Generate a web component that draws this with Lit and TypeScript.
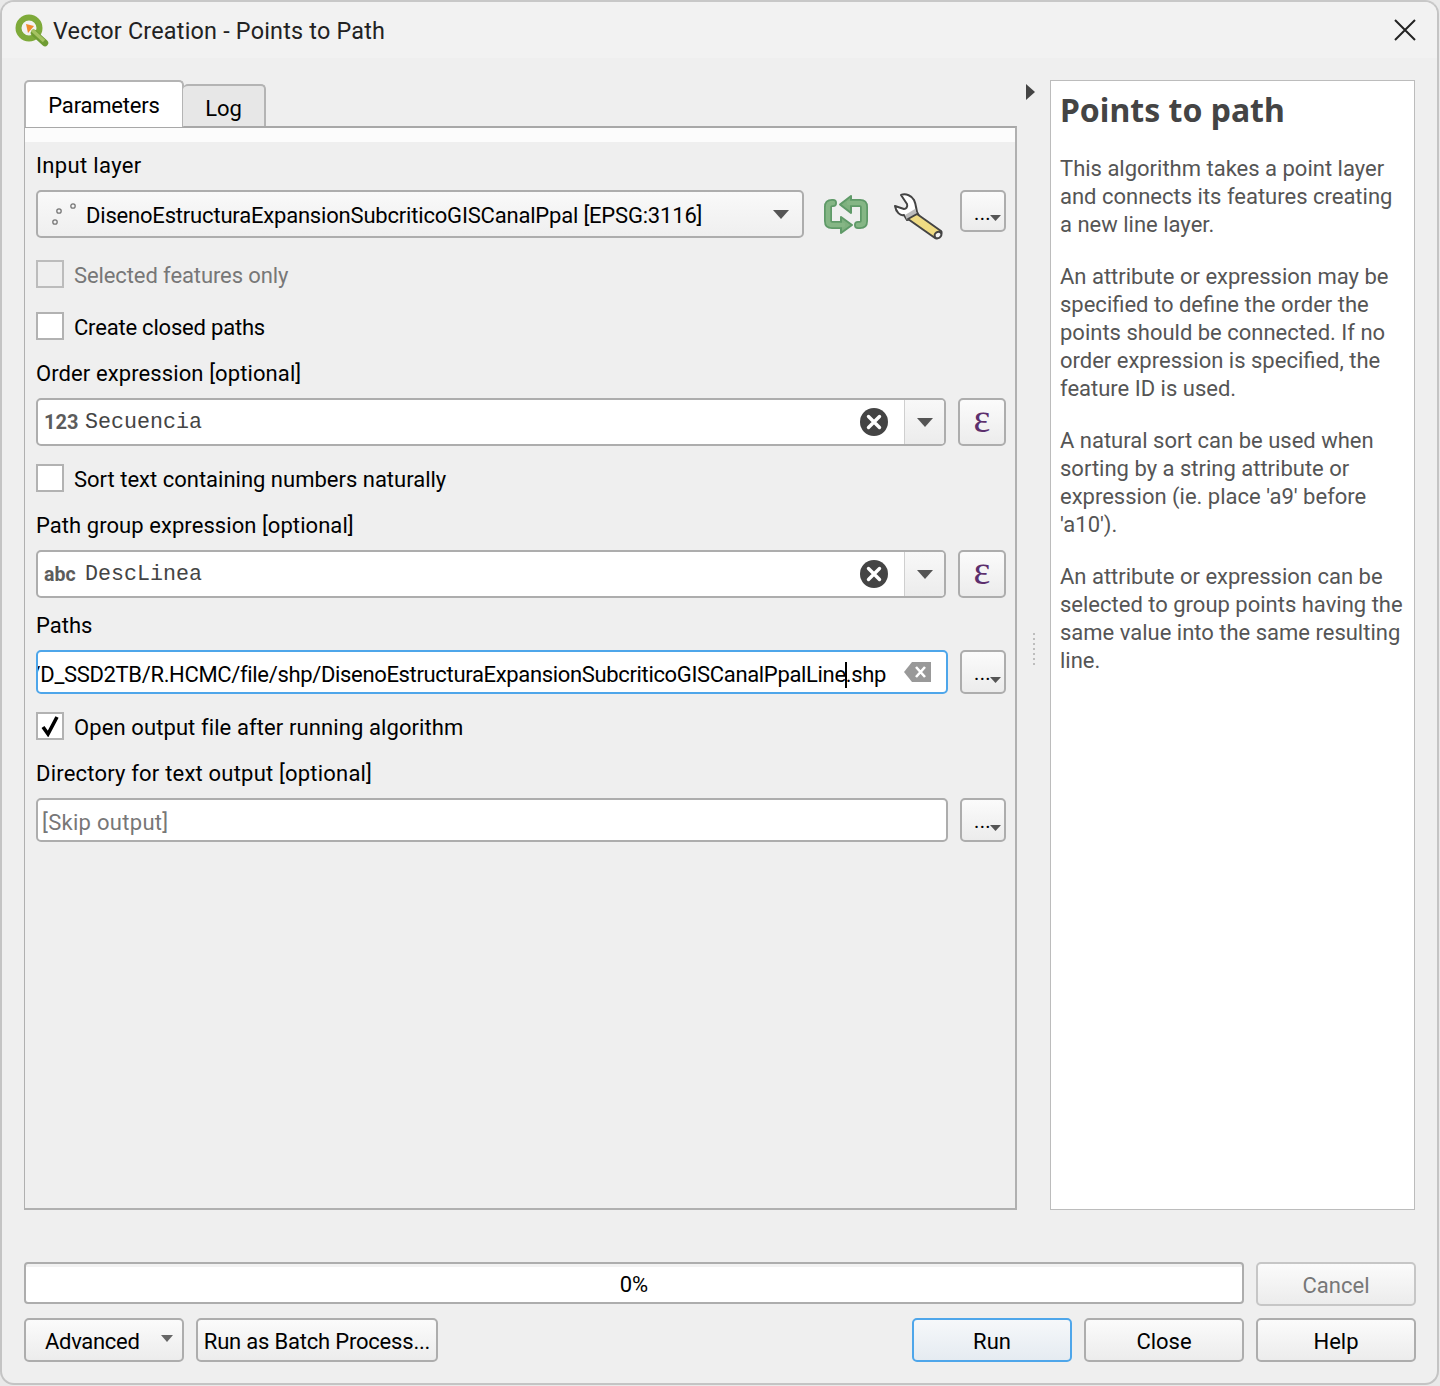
import { LitElement, html, css, svg } from "lit";
import { customElement } from "lit/decorators.js";

const caret = svg`<svg class="caret" width="16" height="9" viewBox="0 0 16 9"><path d="M0 0H16L8 9Z" fill="#555"/></svg>`;
const clearIcon = html`<svg class="clear" width="30" height="30" viewBox="0 0 30 30"><circle cx="15" cy="15" r="14" fill="#444"/><path d="M9.5 9.5L20.5 20.5M20.5 9.5L9.5 20.5" stroke="#fff" stroke-width="3.4" stroke-linecap="round"/></svg>`;
const dotsBtn = html`<div class="btn dots"><span class="dotstext">...</span><svg class="dotcaret" width="11" height="6" viewBox="0 0 11 6"><path d="M0 0H11L5.5 6Z" fill="#555"/></svg></div>`;

@customElement("app-root")
export class AppRoot extends LitElement {
  static styles = css`
    :host { display: block; width: 1440px; height: 1386px; background: #e9e9e9; font-family: Roboto, sans-serif; font-size: 22px; color: #000; overflow: hidden; }
    * { box-sizing: border-box; }
    .win { width: 1439px; height: 1385px; background: #efefef; border: 2px solid #c4c4c4; border-top-color: #c8c8c8; border-radius: 14px; display: flex; flex-direction: column; overflow: hidden; }
    .title { height: 56px; flex: none; background: #f2f2f2; display: flex; align-items: center; padding-left: 12px; }
    .title .t { margin-left: 3px; padding-top: 2px; font-size: 23.4px; color: #222; letter-spacing: .2px; flex: 1; }
    .x { margin-right: 21px; }
    .main { display: flex; height: 1130px; margin-top: 22px; padding-left: 22px; flex: none; }
    .left { width: 993px; display: flex; flex-direction: column; flex: none; }
    .tabs { display: flex; align-items: flex-end; height: 46px; flex: none; position: relative; z-index: 1; }
    .tab { border: 2px solid #b4b4b4; border-bottom: none; border-radius: 5px 5px 0 0; display: flex; align-items: center; justify-content: center; }
    .tab.on { width: 160px; height: 47px; padding-top: 2px; background: #fff; margin-bottom: -1px; letter-spacing: -.2px; }
    .tab.off { width: 83px; height: 42px; background: #e7e7e7; margin-left: -1px; padding-top: 4px; border-left: none; }
    .pane { flex: 1; border: 2px solid #b0b0b0; border-top-color: #a8a8a8; border-left-width: 1px; background: #efefef; min-height: 0; display: flex; flex-direction: column; }
    .strip { height: 14px; background: #fcfcfc; flex: none; }
    .form { padding: 0 9px 0 11px; display: flex; flex-direction: column; }
    .label { height: 28px; line-height: 28px; padding-top: 1px; white-space: nowrap; }
    .ls-in { letter-spacing: .35px; }
    .ls-or { letter-spacing: .1px; }
    .ls-pg { letter-spacing: .06px; }
    .ls-di { letter-spacing: .2px; }
    .row { display: flex; align-items: center; }
    .combo { height: 48px; border: 2px solid #adadad; border-radius: 5px; background: linear-gradient(#f9f9f9, #efefef); display: flex; align-items: center; }
    .layer { width: 768px; }
    .layer .name { margin-left: 8px; padding-top: 2px; flex: 1; white-space: nowrap; letter-spacing: -.19px; }
    .layer .caret { margin-right: 13px; }
    .dots3 { margin-left: 12px; }
    .sync { margin-left: 19px; flex: none; align-self: flex-start; }
    .wrench { margin-left: 24px; flex: none; align-self: flex-start; margin-bottom: -2px; }
    .btn { border: 2px solid #adadad; border-radius: 5px; background: linear-gradient(#fbfbfb, #ececec); display: flex; align-items: center; justify-content: center; }
    .dots { width: 46px; height: 44px; position: relative; flex: none; margin-left: 12px; }
    .dots.short { height: 42px; margin-left: 15px; align-self: flex-start; }
    .dotstext { position: absolute; left: 12px; top: 9px; font-size: 20px; line-height: 24px; letter-spacing: .4px; }
    .dotcaret { position: absolute; right: 3px; bottom: 9px; }
    .check { height: 28px; display: flex; align-items: center; white-space: nowrap; }
    .check .tx { padding-top: 2px; }
    .box { width: 28px; height: 28px; border: 2px solid #b2b2b2; background: #fff; margin-right: 10px; flex: none; display: flex; align-items: center; justify-content: center; }
    .check.dis { color: #777; }
    .check.dis .box { background: #efefef; border-color: #bcbcbc; }
    .ls-se { letter-spacing: -.1px; }
    .ls-cr { letter-spacing: -.2px; }
    .ls-op { letter-spacing: .1px; }
    .m9 { margin-top: 9px; }
    .m11 { margin-top: 11px; }
    .m13 { margin-top: 13px; }
    .m18 { margin-top: 18px; }
    .m19 { margin-top: 19px; }
    .m22 { margin-top: 22px; }
    .m24 { margin-top: 24px; }
    .expr { width: 911px; background: #fff; overflow: hidden; }
    .expr .typ { width: 41px; margin-left: 6px; font: bold 20px Roboto, sans-serif; color: #5c5c5c; flex: none; white-space: nowrap; }
    .expr .typ.a { font-size: 19.5px; }
    .expr .val { flex: 1; font: 21.67px "Liberation Mono", monospace; color: #444; white-space: nowrap; }
    .expr .clear { margin-right: 15px; flex: none; }
    .expr .dd { width: 40px; height: 100%; border-left: 1px solid #cfcfcf; background: linear-gradient(#f8f8f8, #ececec); display: flex; align-items: center; justify-content: center; flex: none; }
    .eps { width: 48px; height: 48px; flex: none; margin-left: 12px; font: 40px "Liberation Serif", serif; color: #5c2f6d; padding-bottom: 8px; }
    .path { width: 912px; height: 44px; border: 2px solid #4ea6ea; border-radius: 5px; background: #fff; display: flex; align-items: center; overflow: hidden; flex: none; }
    .v { flex: 1; min-width: 0; display: flex; justify-content: flex-end; overflow: hidden; padding-top: 6px; }
    .v .txt { flex: none; white-space: nowrap; letter-spacing: -.34px; }
    .cursor { display: inline-block; width: 2px; height: 26px; background: #000; vertical-align: -6px; margin: 0 -1px; }
    .bksp { margin: 0 14px 0 18px; flex: none; }
    .skip { width: 912px; height: 44px; border: 2px solid #adadad; border-radius: 5px; background: #fff; display: flex; align-items: center; padding: 4px 0 0 4px; color: #777; flex: none; letter-spacing: .3px; }
    .mid { width: 33px; flex: none; position: relative; }
    .arrow { position: absolute; left: 9px; top: 4px; }
    .grip { position: absolute; left: 16px; top: 553px; width: 2px; height: 32px; background: repeating-linear-gradient(#bdbdbd 0 2px, transparent 2px 5px); }
    .help { width: 365px; height: 1130px; flex: none; background: #fff; border: 1px solid #bcbcbc; color: #555; padding: 8px 9px; line-height: 28px; white-space: nowrap; }
    .help h1 { margin: 0 0 24px; font: 700 32px/42px "Noto Sans", sans-serif; color: #444; }
    .help p { margin: 0 0 24px; }
    .foot { margin-top: 52px; padding-left: 22px; display: flex; gap: 12px; flex: none; align-items: flex-start; }
    .prog { width: 1220px; height: 42px; padding-top: 2px; flex: none; border: 2px solid #adadad; border-radius: 4px; background: linear-gradient(#f2f2f2 0 3px, #fff 3px); display: flex; align-items: center; justify-content: center; }
    .b { height: 44px; padding-top: 2px; display: flex; align-items: center; justify-content: center; white-space: nowrap; flex: none; }
    .cancel { width: 160px; color: #777; border-color: #c6c6c6; }
    .btns { margin-top: 12px; padding-left: 22px; display: flex; flex: none; }
    .adv { width: 160px; justify-content: flex-start; padding-left: 19px; position: relative; letter-spacing: -.3px; }
    .adv svg { position: absolute; right: 9px; top: 15px; }
    .batch { width: 242px; margin-left: 12px; letter-spacing: -.2px; }
    .run { width: 160px; margin-left: 474px; border-color: #4ea6ea; background: linear-gradient(#f6f8fa, #e5ebf1); }
    .close { width: 160px; margin-left: 12px; }
  `;

  render() {
    return html`
      <div class="win">
        <div class="title">
          <svg width="36" height="34" viewBox="0 0 36 34">
            <circle cx="15" cy="15" r="10.5" fill="none" stroke="#7eaa3a" stroke-width="6"/>
            <path d="M20 20L31 30" stroke="#6f9c33" stroke-width="6.5" stroke-linecap="round"/>
            <path d="M18 17L30 28" stroke="#a5c261" stroke-width="3.5"/>
            <path d="M12 11L20 13L14 20Z" fill="#ee8a2c"/>
          </svg>
          <span class="t">Vector Creation - Points to Path</span>
          <svg class="x" width="22" height="22" viewBox="0 0 22 22"><path d="M1 1L21 21M21 1L1 21" stroke="#222" stroke-width="2"/></svg>
        </div>
        <div class="main">
          <div class="left">
            <div class="tabs">
              <div class="tab on">Parameters</div>
              <div class="tab off">Log</div>
            </div>
            <div class="pane">
              <div class="strip"></div>
              <div class="form">
                <div class="label m9 ls-in">Input layer</div>
                <div class="row m11">
                  <div class="combo layer">
                    <svg class="dots3" width="28" height="28" viewBox="0 0 28 28" fill="none" stroke="#777" stroke-width="1.3"><circle cx="9" cy="11" r="2.2"/><circle cx="23" cy="6" r="2.2"/><circle cx="5" cy="22" r="2.2"/></svg>
                    <span class="name">DisenoEstructuraExpansionSubcriticoGISCanalPpal [EPSG:3116]</span>
                    ${caret}
                  </div>
                  <svg class="sync" width="46" height="44" viewBox="0 0 46 44" stroke-linejoin="round" stroke-linecap="round" fill="none">
                    <g stroke="#5f9a68">
                      <path d="M26 13H37Q41 13 41 17V31Q41 35 37 35H35" stroke-width="8"/>
                      <path d="M20 35H9Q5 35 5 31V17Q5 13 9 13H10" stroke-width="8"/>
                      <path d="M28 6L17 14.5L28 23Z" fill="#7fb17f" stroke-width="2"/>
                      <path d="M18 27L29 35L18 43Z" fill="#7fb17f" stroke-width="2"/>
                    </g>
                    <g stroke="#85b685">
                      <path d="M26 13H37Q41 13 41 17V31Q41 35 37 35H35" stroke-width="4.5"/>
                      <path d="M20 35H9Q5 35 5 31V17Q5 13 9 13H10" stroke-width="4.5"/>
                    </g>
                  </svg>
                  <svg class="wrench" width="52" height="50" viewBox="0 0 52 50">
                    <path d="M8 5C13 3 19 6 21 10C23 14 23 18 24 22L26 26L14 30L11 25C7 26 3 22 2 16L11 19C13 19 15 17 14 14Z" fill="#fff" stroke="#444" stroke-width="2" stroke-linejoin="round"/>
                    <path d="M22 19L25 26L14 30L12 25Z" fill="#bcbcbc"/>
                    <path d="M24 24L48 41C50 43 45 50 42 48L15 29Z" fill="#efdb83" stroke="#444" stroke-width="2" stroke-linejoin="round"/>
                    <ellipse cx="45" cy="45" rx="3" ry="3.6" fill="#f2f2f2" stroke="#444" stroke-width="2" transform="rotate(55 45 45)"/>
                  </svg>
                  <div class="btn dots short"><span class="dotstext">...</span><svg class="dotcaret" width="11" height="6" viewBox="0 0 11 6"><path d="M0 0H11L5.5 6Z" fill="#555"/></svg></div>
                </div>
                <div class="check dis m22"><span class="box"></span><span class="tx ls-se">Selected features only</span></div>
                <div class="check m24"><span class="box"></span><span class="tx ls-cr">Create closed paths</span></div>
                <div class="label m19 ls-or">Order expression [optional]</div>
                <div class="row m11">
                  <div class="combo expr"><span class="typ">123</span><span class="val">Secuencia</span>${clearIcon}<span class="dd">${caret}</span></div>
                  <div class="btn eps">ε</div>
                </div>
                <div class="check m18"><span class="box"></span><span class="tx">Sort text containing numbers naturally</span></div>
                <div class="label m19 ls-pg">Path group expression [optional]</div>
                <div class="row m11">
                  <div class="combo expr"><span class="typ a">abc</span><span class="val">DescLinea</span>${clearIcon}<span class="dd">${caret}</span></div>
                  <div class="btn eps">ε</div>
                </div>
                <div class="label m13">Paths</div>
                <div class="row m11">
                  <div class="path"><span class="v"><span class="txt">/D_SSD2TB/R.HCMC/file/shp/DisenoEstructuraExpansionSubcriticoGISCanalPpalLine<span class="cursor"></span>.shp</span></span>
                    <svg class="bksp" width="28" height="22" viewBox="0 0 28 22"><path d="M8 1H27V21H8L0 11Z" fill="#999"/><path d="M12 6L21 16M21 6L12 16" stroke="#fff" stroke-width="2.6"/></svg>
                  </div>
                  ${dotsBtn}
                </div>
                <div class="check m18"><span class="box"><svg width="20" height="22" viewBox="0 0 20 22"><path d="M3 12L8 19L17 2" fill="none" stroke="#000" stroke-width="3.6"/></svg></span><span class="tx ls-op">Open output file after running algorithm</span></div>
                <div class="label m19 ls-di">Directory for text output [optional]</div>
                <div class="row m11">
                  <div class="skip">[Skip output]</div>
                  ${dotsBtn}
                </div>
              </div>
            </div>
          </div>
          <div class="mid">
            <svg class="arrow" width="9" height="16" viewBox="0 0 9 16"><path d="M0 0L9 8L0 16Z" fill="#444"/></svg>
            <div class="grip"></div>
          </div>
          <div class="help">
            <h1>Points to path</h1>
            <p>This algorithm takes a point layer<br>and connects its features creating<br>a new line layer.</p>
            <p>An attribute or expression may be<br>specified to define the order the<br>points should be connected. If no<br>order expression is specified, the<br>feature ID is used.</p>
            <p>A natural sort can be used when<br>sorting by a string attribute or<br>expression (ie. place 'a9' before<br>'a10').</p>
            <p>An attribute or expression can be<br>selected to group points having the<br>same value into the same resulting<br>line.</p>
          </div>
        </div>
        <div class="foot">
          <div class="prog">0%</div>
          <div class="btn b cancel">Cancel</div>
        </div>
        <div class="btns">
          <div class="btn b adv">Advanced<svg width="12" height="7" viewBox="0 0 12 7"><path d="M0 0H12L6 7Z" fill="#666"/></svg></div>
          <div class="btn b batch">Run as Batch Process...</div>
          <div class="btn b run">Run</div>
          <div class="btn b close">Close</div>
          <div class="btn b close">Help</div>
        </div>
      </div>
    `;
  }
}
